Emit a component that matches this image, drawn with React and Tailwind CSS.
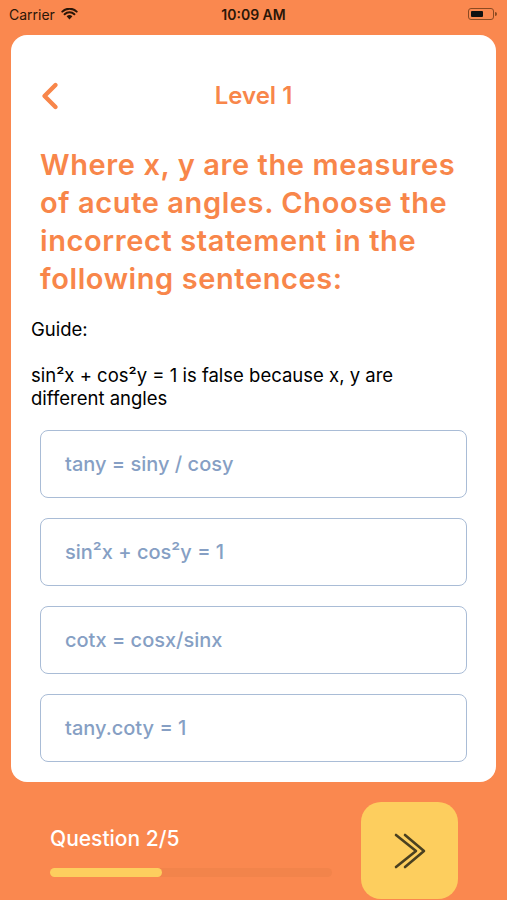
import { ChevronLeft } from 'lucide-react';

const options = [
  <>tany = siny / cosy</>,
  <>sin²x + cos²y = 1</>,
  <>cotx = cosx/sinx</>,
  <>tany.coty = 1</>,
];

function StatusBar() {
  return (
    <div className="h-[28px] shrink-0 flex items-center justify-between px-[9px] text-[14px] text-[#2a1608]">
      <div className="flex items-center gap-[6px] w-[120px]">
        <span>Carrier</span>
        <svg width="17" height="12" viewBox="0 0 17 12">
          <path d="M8.5 11.5 L5.6 8.3 A4.2 4.2 0 0 1 11.4 8.3 Z" fill="#2a1608" />
          <path d="M3.6 6.2 A7 7 0 0 1 13.4 6.2" stroke="#2a1608" strokeWidth="2" fill="none" strokeLinecap="round" />
          <path d="M1.3 3.6 A10.4 10.4 0 0 1 15.7 3.6" stroke="#2a1608" strokeWidth="2" fill="none" strokeLinecap="round" />
        </svg>
      </div>
      <span className="font-semibold">10:09 AM</span>
      <div className="w-[120px] flex justify-end items-center pr-[1px]">
        <div className="w-[26px] h-[12px] rounded-[3px] border border-[#8a4a22] p-[2px] flex">
          <div className="w-[12px] h-full bg-[#111] rounded-[1px]" />
        </div>
        <div className="w-[2px] h-[4px] bg-[#8a4a22] rounded-r-sm ml-[1px]" />
      </div>
    </div>
  );
}

export default function App() {
  return (
    <div
      className="w-[507px] h-[900px] overflow-hidden bg-[#fa884f] flex flex-col"
      style={{ fontFamily: 'Inter, "Open Sans", sans-serif' }}
    >
      <StatusBar />
      <div className="shrink-0 mx-[11px] mt-[7px] bg-white rounded-[16px] pl-[20px] pr-[29px] pt-[31px] pb-[20px]">
        <div className="h-[60px] relative flex items-center justify-center pl-[9px]">
          <ChevronLeft className="absolute left-[-3px] top-[8px] text-[#f8864a]" size={44} strokeWidth={2.4} />
          <span className="text-[24px] font-semibold text-[#f8864a]">Level 1</span>
        </div>
        <h1 className="ml-[9px] mt-[20px] text-[29px] leading-[38px] font-semibold text-[#f8864a] tracking-[0.6px]">
          Where x, y are the measures of acute angles. Choose the incorrect statement in the following sentences:
        </h1>
        <p className="text-[18.5px] leading-[23px] text-black mt-[19.5px]">Guide:</p>
        <p className="text-[18.5px] leading-[23px] text-black mt-[23px] max-w-[385px]">
          sin²x + cos²y = 1 is false because x, y are different angles
        </p>
        <div className="ml-[9px] flex flex-col gap-[20px] mt-[20.5px]">
          {options.map((o, i) => (
            <div
              key={i}
              className="h-[68px] rounded-[8px] border border-[#a9bcd6] flex items-center px-[24px] text-[20px] font-medium text-[#869fc4]"
            >
              {o}
            </div>
          ))}
        </div>
      </div>
      <div className="shrink-0 flex items-start justify-between pl-[50px] pr-[49px] mt-[20px]">
        <div className="pt-[24px]">
          <div className="text-[21px] leading-[26px] font-medium text-white">Question 2/5</div>
          <div className="mt-[16px] w-[282px] h-[9px] rounded-full bg-[#f2844b] flex">
            <div className="w-[112px] h-full rounded-full bg-[#fdce5e]" />
          </div>
        </div>
        <button className="w-[97px] h-[97px] rounded-[20px] bg-[#fdce5e] flex items-center justify-center">
          <svg width="32" height="36" viewBox="0 0 32 36" fill="none" stroke="#4a4020" strokeWidth="2.6" strokeLinecap="round" strokeLinejoin="round">
            <path d="M2 2 L22 18 L2 34" />
            <path d="M11 2 L30 18 L11 34" />
          </svg>
        </button>
      </div>
    </div>
  );
}
